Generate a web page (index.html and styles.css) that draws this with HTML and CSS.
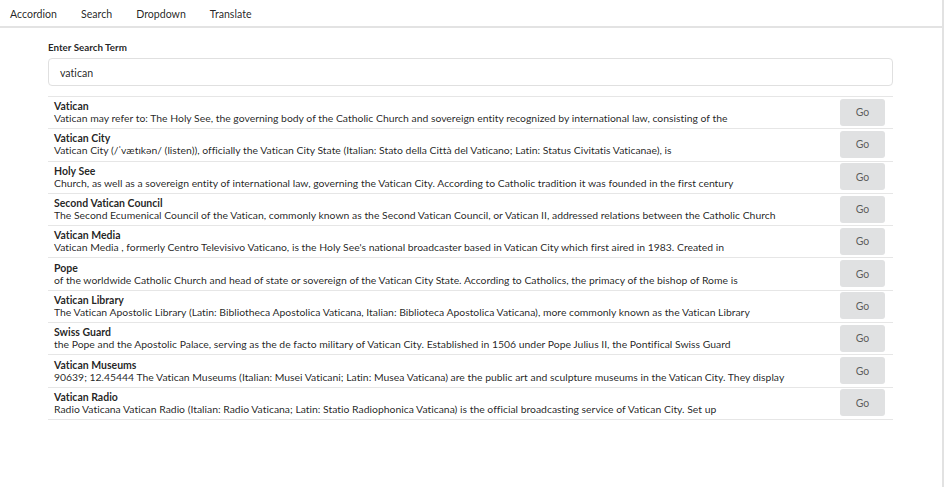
FILE: index.html
```html
<!DOCTYPE html>
<html>
<head>
<meta charset="utf-8">
<link rel="stylesheet" href="styles.css">
</head>
<body>
<div class="page">
  <nav class="nav">
    <a class="nav-item">Accordion</a>
    <a class="nav-item">Search</a>
    <a class="nav-item">Dropdown</a>
    <a class="nav-item">Translate</a>
  </nav>
  <main class="container">
    <label class="label">Enter Search Term</label>
    <div class="search-box"><span class="search-value">vatican</span></div>
    <div class="results">
      <div class="row"><div class="text"><div class="title">Vatican</div><div class="desc">Vatican may refer to: The Holy See, the governing body of the Catholic Church and sovereign entity recognized by international law, consisting of the</div></div><button class="go">Go</button></div>
      <div class="row"><div class="text"><div class="title">Vatican City</div><div class="desc">Vatican City (/ˈvætɪkən/ (listen)), officially the Vatican City State (Italian: Stato della Città del Vaticano; Latin: Status Civitatis Vaticanae), is</div></div><button class="go">Go</button></div>
      <div class="row"><div class="text"><div class="title">Holy See</div><div class="desc">Church, as well as a sovereign entity of international law, governing the Vatican City. According to Catholic tradition it was founded in the first century</div></div><button class="go">Go</button></div>
      <div class="row"><div class="text"><div class="title">Second Vatican Council</div><div class="desc">The Second Ecumenical Council of the Vatican, commonly known as the Second Vatican Council, or Vatican II, addressed relations between the Catholic Church</div></div><button class="go">Go</button></div>
      <div class="row"><div class="text"><div class="title">Vatican Media</div><div class="desc">Vatican Media , formerly Centro Televisivo Vaticano, is the Holy See's national broadcaster based in Vatican City which first aired in 1983. Created in</div></div><button class="go">Go</button></div>
      <div class="row"><div class="text"><div class="title">Pope</div><div class="desc">of the worldwide Catholic Church and head of state or sovereign of the Vatican City State. According to Catholics, the primacy of the bishop of Rome is</div></div><button class="go">Go</button></div>
      <div class="row"><div class="text"><div class="title">Vatican Library</div><div class="desc">The Vatican Apostolic Library (Latin: Bibliotheca Apostolica Vaticana, Italian: Biblioteca Apostolica Vaticana), more commonly known as the Vatican Library</div></div><button class="go">Go</button></div>
      <div class="row"><div class="text"><div class="title">Swiss Guard</div><div class="desc">the Pope and the Apostolic Palace, serving as the de facto military of Vatican City. Established in 1506 under Pope Julius II, the Pontifical Swiss Guard</div></div><button class="go">Go</button></div>
      <div class="row"><div class="text"><div class="title">Vatican Museums</div><div class="desc">90639; 12.45444 The Vatican Museums (Italian: Musei Vaticani; Latin: Musea Vaticana) are the public art and sculpture museums in the Vatican City. They display</div></div><button class="go">Go</button></div>
      <div class="row"><div class="text"><div class="title">Vatican Radio</div><div class="desc">Radio Vaticana Vatican Radio (Italian: Radio Vaticana; Latin: Statio Radiophonica Vaticana) is the official broadcasting service of Vatican City. Set up</div></div><button class="go">Go</button></div>
    </div>
  </main>
</div>
</body>
</html>
```

FILE: styles.css
```css
html, body {
  margin: 0;
  padding: 0;
  background: #fff;
}
body {
  font-family: Lato, "Helvetica Neue", Arial, sans-serif;
  color: rgba(0, 0, 0, 0.87);
  font-variant-ligatures: no-common-ligatures;
}
.page {
  width: 942px;
  height: 487px;
  border-right: 2px solid #e2e2e2;
}
.nav {
  display: flex;
  height: 28px;
  align-items: center;
  border-bottom: 2px solid #e3e3e3;
  box-sizing: border-box;
  padding-top: 1px;
}
.nav-item {
  font-size: 10.6px;
  padding: 0 12px;
  line-height: 26px;
  color: rgba(0, 0, 0, 0.87);
}
.nav-item:first-child {
  padding-left: 10px;
}
.container {
  width: 845px;
  margin: 0 0 0 48px;
  padding-top: 13px;
}
.label {
  display: block;
  font-size: 9.8px;
  font-weight: 700;
  line-height: 12px;
  margin-bottom: 5px;
}
.search-box {
  box-sizing: border-box;
  height: 28px;
  margin-bottom: 10px;
  padding: 0 11px;
  border: 1px solid #e0e0e0;
  border-radius: 4px;
  display: flex;
  align-items: center;
}
.search-value {
  font-size: 10.6px;
  color: rgba(0, 0, 0, 0.87);
  padding-top: 1px;
}
.results {
  border-top: 1px solid #e6e6e6;
}
.row {
  display: flex;
  align-items: center;
  justify-content: space-between;
  border-bottom: 1px solid #e6e6e6;
  padding: 0 8px 0 6px;
  height: 31.3px;
}
.text {
  line-height: 12px;
  margin-top: -1px;
}
.title {
  font-size: 10.5px;
  font-weight: 700;
}
.desc {
  font-size: 10.4px;
  white-space: nowrap;
}
.go {
  width: 45px;
  height: 27px;
  border: none;
  border-radius: 3px;
  background: #e0e1e2;
  color: rgba(0, 0, 0, 0.62);
  font-family: inherit;
  font-size: 10.5px;
  font-weight: 400;
  padding: 0;
  margin-top: -1px;
}
```
